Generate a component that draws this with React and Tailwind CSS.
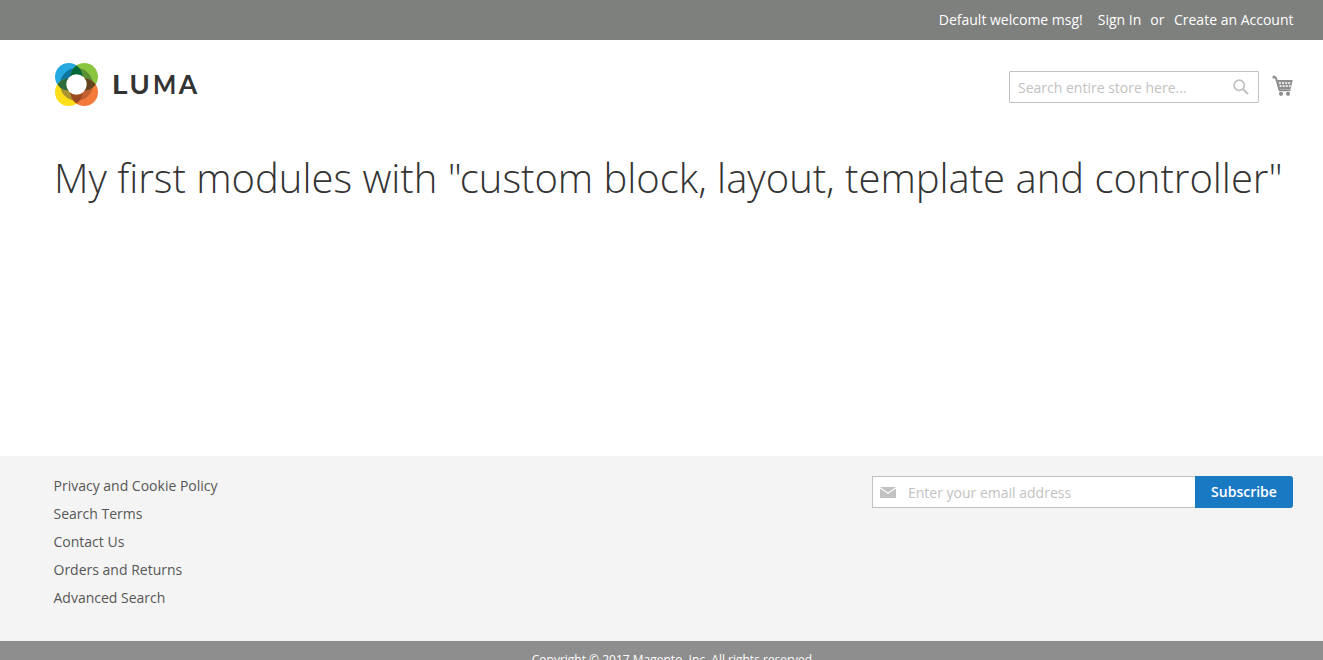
const footerLinks = [
  "Privacy and Cookie Policy",
  "Search Terms",
  "Contact Us",
  "Orders and Returns",
  "Advanced Search",
];

function LumaMark() {
  return (
    <svg className="h-11 w-11" viewBox="0 0 44 44" aria-hidden="true">
      <defs>
        <clipPath id="ring"><circle cx="22.5" cy="22.5" r="16.4" /></clipPath>
        <clipPath id="tl"><circle cx="14.7" cy="14.7" r="13.7" /></clipPath>
        <clipPath id="tr"><circle cx="30.3" cy="14.7" r="13.7" /></clipPath>
        <clipPath id="bl"><circle cx="14.7" cy="30.3" r="13.7" /></clipPath>
      </defs>
      <circle cx="14.7" cy="14.7" r="13.7" fill="#26a9e0" />
      <circle cx="30.3" cy="14.7" r="13.7" fill="#8bc53f" />
      <circle cx="14.7" cy="30.3" r="13.7" fill="#ffde17" />
      <circle cx="30.3" cy="30.3" r="13.7" fill="#f37a3a" />
      <g clipPath="url(#ring)">
        <circle cx="14.7" cy="14.7" r="13.7" fill="#0c76a0" />
        <circle cx="30.3" cy="14.7" r="13.7" fill="#5b8f36" />
        <circle cx="14.7" cy="30.3" r="13.7" fill="#a99331" />
        <circle cx="30.3" cy="30.3" r="13.7" fill="#c0602f" />
      </g>
      <circle cx="30.3" cy="14.7" r="13.7" fill="#006838" clipPath="url(#tl)" />
      <circle cx="14.7" cy="30.3" r="13.7" fill="#2d6b3c" clipPath="url(#tl)" />
      <circle cx="30.3" cy="30.3" r="13.7" fill="#62451f" clipPath="url(#tr)" />
      <circle cx="30.3" cy="30.3" r="13.7" fill="#9c4a22" clipPath="url(#bl)" />
      <circle cx="22.5" cy="22.5" r="10.2" fill="#fff" />
    </svg>
  );
}

function CartIcon() {
  return (
    <svg className="h-[22px] w-[22px]" viewBox="0 0 22 22" fill="none" aria-hidden="true">
      <path d="M1.5 1.8 L4 2.9 L7.6 15.2 H18.5" stroke="#8f8f8f" strokeWidth="2" />
      <circle cx="1.9" cy="1.9" r="1.5" fill="#8f8f8f" />
      <path d="M4.3 5 H20.8 L18.6 14 H6.7 Z" fill="#8f8f8f" />
      <path d="M6.9 8 H19.2 M7.6 11 H18.6" stroke="#fff" strokeWidth="1.5" strokeDasharray="2 1.1" />
      <circle cx="9" cy="18.8" r="2.1" fill="#8f8f8f" />
      <circle cx="16" cy="18.8" r="2.1" fill="#8f8f8f" />
    </svg>
  );
}

export default function App() {
  return (
    <div className="flex h-[660px] flex-col overflow-hidden bg-white font-['Open_Sans',sans-serif] text-sm text-[#333]">
      <div className="flex h-10 shrink-0 items-center justify-end bg-[#7e807e] pr-[29.5px] font-medium text-white">
        <span className="mr-[15px]">Default welcome msg!</span>
        <a>Sign In</a>
        <span className="mr-[9.5px] ml-[9px]">or</span>
        <a>Create an Account</a>
      </div>
      <header className="flex h-[109px] shrink-0 items-start justify-between pr-[29px] pl-[54px]">
        <div className="mt-[22px] flex items-center">
          <LumaMark />
          <svg className="ml-[14px] h-7 w-[92px] overflow-visible" viewBox="0 0 92 28" role="img" aria-label="LUMA">
            <g fontFamily="Lato" fontWeight="700" fontSize="26.5" fill="#333">
              <text transform="translate(-0.2 23.6) scale(1.15 1)">L</text>
              <text transform="translate(17.6 23.6) scale(1.03 1)">U</text>
              <text transform="translate(41.1 23.6) scale(0.93 1)">M</text>
              <text transform="translate(66.8 23.6)">A</text>
            </g>
          </svg>
        </div>
        <div className="mt-[31px] flex items-start">
          <div className="flex h-8 w-[250px] items-center justify-between rounded-[1px] border border-[#c2c2c2] pr-[9px] pl-2 text-[#c2c2c2]">
            <span className="mt-0.5">Search entire store here...</span>
            <svg className="h-4 w-4" viewBox="0 0 16 16" fill="none" stroke="#c2c2c2" aria-hidden="true">
              <circle cx="6.2" cy="6.2" r="5.1" strokeWidth="1.7" />
              <path d="M10 10 L15 15" strokeWidth="2.2" />
            </svg>
          </div>
          <div className="mt-[4px] ml-[13px]"><CartIcon /></div>
        </div>
      </header>
      <main className="h-[307px] shrink-0 pl-[54px]">
        <h1 className="text-[40px] leading-[58px] font-light tracking-[-0.01px] whitespace-nowrap">
          My first modules with <span className="tracking-[-2px]">"</span>custom block, layout, template and controller"
        </h1>
      </main>
      <footer className="flex h-[185px] shrink-0 justify-between bg-[#f4f4f4] pt-5 pr-[30px] pl-[53.5px]">
        <ul className="flex flex-col gap-2 text-[#575757]">
          {footerLinks.map((label) => (
            <li key={label} className="h-5 leading-5">{label}</li>
          ))}
        </ul>
        <div className="flex h-8">
          <div className="flex w-[323px] items-center border border-r-0 border-[#c2c2c2] bg-white pl-[7px] text-[#c2c2c2]">
            <svg className="h-[11px] w-4" viewBox="0 0 16 11" aria-hidden="true">
              <rect width="16" height="11" rx="0.5" fill="#c2c2c2" />
              <path d="M0 0.7 L8 6.3 L16 0.7" fill="none" stroke="#fff" strokeWidth="1.2" />
            </svg>
            <span className="mt-0.5 ml-3">Enter your email address</span>
          </div>
          <button className="w-[98px] rounded-r-[3px] bg-[#1979c3] font-semibold text-white">Subscribe</button>
        </div>
      </footer>
      <small className="block h-[40px] shrink-0 bg-[#8e8e8e] pt-[11px] pl-[24px] text-center text-xs leading-4 font-medium text-white">
        Copyright © 2017 Magento, Inc. All rights reserved.
      </small>
    </div>
  );
}
